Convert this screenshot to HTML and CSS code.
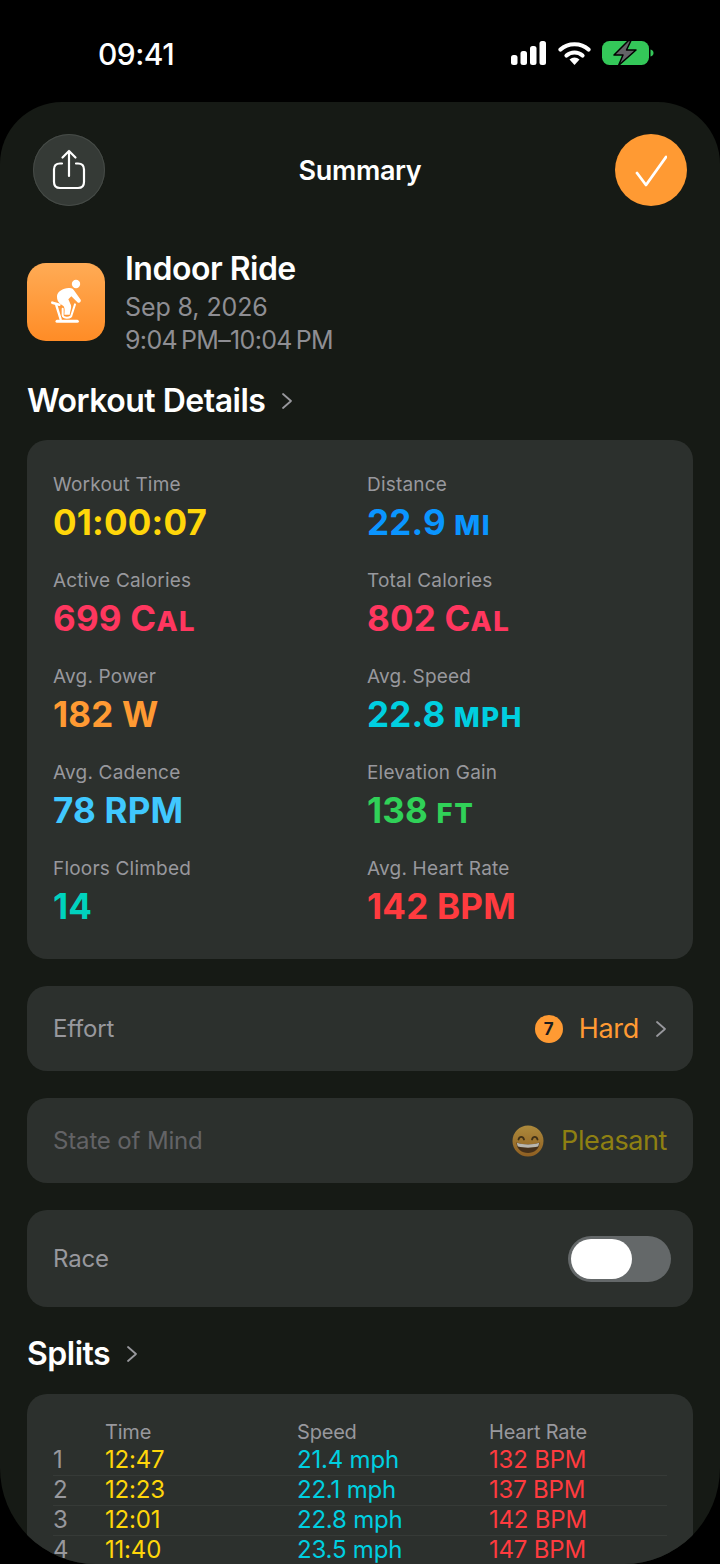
FILE: index.html
```html
<!DOCTYPE html>
<html lang="en">
<head>
    <meta charset="UTF-8">
    <meta name="viewport" content="width=device-width, initial-scale=1.0">
    <title>Summary</title>
    <link rel="stylesheet" href="styles.css">
</head>
<body>
    <div class="status-bar">
        <span class="clock">09:41</span>
        <div class="status-icons">
            <svg width="36" height="24" viewBox="0 0 36 24">
                <rect x="0" y="14" width="6.5" height="10" rx="2.5" fill="#fff"/>
                <rect x="9.5" y="10" width="6.5" height="14" rx="2.5" fill="#fff"/>
                <rect x="19" y="5" width="6.5" height="19" rx="2.5" fill="#fff"/>
                <rect x="28.5" y="0" width="6.5" height="24" rx="2.5" fill="#fff"/>
            </svg>
            <svg width="33" height="24" viewBox="0 0 33 24">
                <path d="M2.5 8.5C10 1.5 23 1.5 30.500 8.500" fill="none" stroke="#fff" stroke-width="4.200" stroke-linecap="round"/>
                <path d="M8.500 14.500C13 10.500 20 10.500 24.500 14.500" fill="none" stroke="#fff" stroke-width="4.200" stroke-linecap="round"/>
                <path d="M11.500 18.500C14.500 15.800 18.500 15.800 21.500 18.500L16.500 24Z" fill="#fff"/>
            </svg>
            <svg width="52" height="26" viewBox="0 0 52 26">
                <rect x="0" y="1" width="47" height="24" rx="7.500" fill="#34c759"/>
                <path d="M48.500 9.500c2 .3 3 1.800 3 3.500s-1 3.200-3 3.500z" fill="#34c759"/>
                <path d="M26.500 0.500L12 15H21L16.500 25.500L34 10H24.500L29 0.500Z" fill="#636366" stroke="#000" stroke-width="1.500" stroke-linejoin="round"/>
            </svg>
        </div>
    </div>

    <div class="sheet">
        <header class="nav">
            <button class="round-btn share-btn">
                <svg width="36" height="42" viewBox="0 0 36 42" fill="none" stroke="#fff" stroke-width="2.200" stroke-linecap="round" stroke-linejoin="round">
                    <path d="M11 14.500H9C5 14.500 3 16.500 3 20.500V33C3 37 5 39 9 39H27C31 39 33 37 33 33V20.500C33 16.500 31 14.500 27 14.500H25"/>
                    <path d="M18 27V2M11.500 8.500L18 2L24.500 8.500"/>
                </svg>
            </button>
            <h1 class="nav-title">Summary</h1>
            <button class="round-btn done-btn">
                <svg width="32" height="36" viewBox="0 0 32 36" fill="none" stroke="#fff" stroke-width="2.800" stroke-linecap="round" stroke-linejoin="round">
                    <path d="M2 21L11 33L31 5"/>
                </svg>
            </button>
        </header>

        <section class="workout-head">
            <div class="app-icon">
                <svg width="78" height="78" viewBox="3 3 234 234">
                    <circle cx="150" cy="66" r="12.500" fill="#fff"/>
                    <path d="M93 102C95 88 110 80 128 78C137 77 142 80 146 88L164 113C166 118 162 124 156 122L136 103L127 112L135 130C137 136 133 146 131 158L115 158C116 148 117 140 113 133C106 127 92 122 93 102Z" fill="#fff"/>
                    <g fill="none" stroke="#fff" stroke-linecap="round" stroke-linejoin="round">
                        <path d="M79 122L100 128" stroke-width="8"/>
                        <path d="M91 130L104 172" stroke-width="7"/>
                        <path d="M110 140V160C110 170 136 170 137 158L147 127" stroke-width="6"/>
                        <path d="M93 178H154" stroke-width="9"/>
                    </g>
                </svg>
            </div>
            <div class="workout-text">
                <div class="workout-name">Indoor Ride</div>
                <div class="workout-sub">Sep 8, 2026</div>
                <div class="workout-sub time-range">9:04&#8201;PM–10:04&#8201;PM</div>
            </div>
        </section>

        <h2 class="section-title">Workout Details
            <svg class="chev-title" width="12" height="18" viewBox="0 0 12 18" fill="none" stroke="#98989d" stroke-width="1.800" stroke-linecap="round" stroke-linejoin="round"><path d="M2 2L10 9L2 16"/></svg>
        </h2>

        <section class="card details">
            <div class="stat"><div class="stat-label">Workout Time</div><div class="stat-value yellow">01:00:07</div></div>
            <div class="stat"><div class="stat-label">Distance</div><div class="stat-value blue">22.9 <span class="unit">MI</span></div></div>
            <div class="stat"><div class="stat-label">Active Calories</div><div class="stat-value pink">699 C<span class="unit">AL</span></div></div>
            <div class="stat"><div class="stat-label">Total Calories</div><div class="stat-value pink">802 C<span class="unit">AL</span></div></div>
            <div class="stat"><div class="stat-label">Avg. Power</div><div class="stat-value orange">182 W</div></div>
            <div class="stat"><div class="stat-label">Avg. Speed</div><div class="stat-value cyan">22.8 <span class="unit">MPH</span></div></div>
            <div class="stat"><div class="stat-label">Avg. Cadence</div><div class="stat-value sky">78 RPM</div></div>
            <div class="stat"><div class="stat-label">Elevation Gain</div><div class="stat-value green">138 <span class="unit">FT</span></div></div>
            <div class="stat"><div class="stat-label">Floors Climbed</div><div class="stat-value teal">14</div></div>
            <div class="stat"><div class="stat-label">Avg. Heart Rate</div><div class="stat-value red">142 BPM</div></div>
        </section>

        <section class="card row">
            <span class="row-label">Effort</span>
            <div class="row-right">
                <span class="effort-badge">7</span>
                <span class="effort-text">Hard</span>
                <svg width="12" height="18" viewBox="0 0 12 18" fill="none" stroke="#98989d" stroke-width="1.800" stroke-linecap="round" stroke-linejoin="round"><path d="M2 2L10 9L2 16"/></svg>
            </div>
        </section>

        <section class="card row">
            <span class="row-label dim">State of Mind</span>
            <div class="row-right mood">
                <svg width="32" height="32" viewBox="0 0 32 32">
                    <defs><linearGradient id="face" x1="0" y1="0" x2="0" y2="1"><stop offset="0" stop-color="#ad8a3c"/><stop offset="1" stop-color="#8f5f22"/></linearGradient></defs>
                    <circle cx="16" cy="16" r="15.500" fill="url(#face)"/>
                    <path d="M6.500 14.500C7.500 11 11 11 12 14.500M20 14.500C21 11 24.500 11 25.500 14.500" fill="none" stroke="#3f3017" stroke-width="1.800" stroke-linecap="round"/>
                    <path d="M4.500 17.500C11 20 21 20 27.500 17.500C27.500 24 22 28 16 28C10 28 4.500 24 4.500 17.500Z" fill="#45301a"/>
                    <path d="M5 17.700C11 20 21 20 27 17.700C27 19.500 26.500 20.800 26 21.500C20 23 12 23 6 21.500C5.500 20.800 5 19.500 5 17.700Z" fill="#b9b6ae"/>
                </svg>
                <span class="mood-text">Pleasant</span>
            </div>
        </section>

        <section class="card row race">
            <span class="row-label">Race</span>
            <div class="toggle"><span class="knob"></span></div>
        </section>

        <h2 class="section-title splits-title">Splits
            <svg class="chev-title" width="12" height="18" viewBox="0 0 12 18" fill="none" stroke="#98989d" stroke-width="1.800" stroke-linecap="round" stroke-linejoin="round"><path d="M2 2L10 9L2 16"/></svg>
        </h2>

        <section class="card splits">
            <div class="split-row split-head"><span></span><span>Time</span><span>Speed</span><span>Heart Rate</span></div>
            <div class="split-row"><span class="num">1</span><span class="yellow">12:47</span><span class="cyan">21.4 mph</span><span class="red">132 BPM</span></div>
            <div class="split-row"><span class="num">2</span><span class="yellow">12:23</span><span class="cyan">22.1 mph</span><span class="red">137 BPM</span></div>
            <div class="split-row"><span class="num">3</span><span class="yellow">12:01</span><span class="cyan">22.8 mph</span><span class="red">142 BPM</span></div>
            <div class="split-row"><span class="num">4</span><span class="yellow">11:40</span><span class="cyan">23.5 mph</span><span class="red">147 BPM</span></div>
        </section>
    </div>
</body>
</html>
```

FILE: styles.css
```css
html, body {
    margin: 0;
    height: 1564px;
    overflow: hidden;
}
body {
    background-color: #000;
    color: #fff;
    font-family: Inter, "Noto Sans", sans-serif;
    display: flex;
    flex-direction: column;
}
.status-bar {
    height: 102px;
    flex-shrink: 0;
    box-sizing: border-box;
    padding: 39px 66px 0 98px;
    display: flex;
    justify-content: space-between;
    align-items: flex-start;
}
.clock {
    font-size: 30px;
    font-weight: 500;
    line-height: 30px;
    letter-spacing: -0.5px;
}
.status-icons {
    display: flex;
    align-items: center;
    gap: 11px;
    padding-top: 1px;
}
.sheet {
    flex: 1;
    background-color: #161a15;
    border-radius: 62px 62px 96px 96px;
    overflow: hidden;
    box-sizing: border-box;
    padding: 32px 27px 0;
}
.nav {
    display: flex;
    justify-content: space-between;
    align-items: center;
    padding: 0 6px;
}
.nav-title {
    margin: 0;
    font-size: 27px;
    font-weight: 600;
    letter-spacing: -0.35px;
}
.round-btn {
    width: 72px;
    height: 72px;
    border-radius: 50%;
    border: none;
    padding: 0;
    display: flex;
    align-items: center;
    justify-content: center;
}
.share-btn {
    background-color: #353a36;
    box-shadow: inset 0 0 0 1px #464b47;
}
.done-btn {
    background-color: #ff9a33;
}
.workout-head {
    margin-top: 42px;
    display: flex;
    align-items: flex-start;
    gap: 20px;
}
.app-icon {
    width: 78px;
    height: 78px;
    margin-top: 15px;
    border-radius: 19px;
    background: linear-gradient(#ffab55, #ff8c26);
    overflow: hidden;
}
.app-icon svg {
    display: block;
}
.workout-text {
    padding-top: 3px;
}
.workout-name {
    font-size: 32px;
    font-weight: 600;
    line-height: 36px;
    letter-spacing: -0.5px;
    margin-bottom: 4px;
}
.workout-sub {
    font-size: 25px;
    line-height: 33px;
    color: #8e8e93;
    letter-spacing: -0.1px;
}
.time-range {
    letter-spacing: -0.65px;
}
.section-title {
    margin: 24px 0 0;
    font-size: 32px;
    font-weight: 600;
    line-height: 40px;
    letter-spacing: -0.5px;
    display: flex;
    align-items: center;
    gap: 16px;
}
.card {
    background-color: #2c302d;
    border-radius: 20px;
}
.details {
    margin-top: 19px;
    height: 519px;
    box-sizing: border-box;
    padding: 33px 26px 0;
    display: grid;
    grid-template-columns: 314px 1fr;
    grid-auto-rows: 96px;
}
.stat-label {
    font-size: 19px;
    line-height: 24px;
    color: #98989d;
    letter-spacing: 0.2px;
}
.stat-value {
    font-size: 35px;
    font-weight: 700;
    line-height: 44px;
    margin-top: 3px;
    letter-spacing: 0.2px;
}
.unit {
    font-size: 27.5px;
    font-weight: 800;
    letter-spacing: 1.5px;
}
.yellow { color: #ffd60a; }
.blue { color: #0a95ff; }
.pink { color: #ff375f; }
.orange { color: #ff9a33; }
.cyan { color: #00cfe0; }
.sky { color: #40c8ff; }
.green { color: #30d158; }
.teal { color: #00d2be; }
.red { color: #ff3b3f; }
.row {
    height: 85px;
    margin-top: 27px;
    box-sizing: border-box;
    padding: 0 26px;
    display: flex;
    justify-content: space-between;
    align-items: center;
}
.row-label {
    font-size: 24px;
    color: #98989d;
    letter-spacing: -0.15px;
}
.row-label.dim {
    color: #636366;
}
.row-right {
    display: flex;
    align-items: center;
}
.effort-badge {
    width: 28px;
    height: 28px;
    border-radius: 50%;
    background-color: #ff9a33;
    color: #1c1c1e;
    font-size: 17px;
    font-weight: 700;
    display: flex;
    align-items: center;
    justify-content: center;
    margin-right: 16px;
}
.effort-text {
    font-size: 27px;
    color: #ff9a33;
    margin-right: 16px;
    letter-spacing: -0.3px;
}
.mood {
    gap: 17px;
}
.mood-text {
    font-size: 27px;
    color: #8f8012;
    letter-spacing: -0.4px;
}
.race {
    height: 97px;
    padding-right: 22px;
}
.toggle {
    width: 103px;
    height: 46px;
    border-radius: 23px;
    background-color: #646869;
    box-sizing: border-box;
    padding: 3px;
}
.knob {
    display: block;
    width: 61px;
    height: 40px;
    border-radius: 20px;
    background-color: #fff;
}
.splits-title {
    margin-top: 27px;
}
.splits {
    margin-top: 20px;
    height: 200px;
    box-sizing: border-box;
    padding: 27px 26px 0;
}
.split-row {
    display: grid;
    grid-template-columns: 52px 192px 192px 1fr;
    height: 30px;
    line-height: 29px;
    font-size: 24px;
    letter-spacing: -0.2px;
    box-shadow: 0 1px 0 #363a37;
}
.split-head {
    height: 24px;
    line-height: 22px;
    font-size: 20px;
    letter-spacing: -0.2px;
    color: #98989d;
    box-shadow: none;
}
.num {
    color: #98989d;
}
```
